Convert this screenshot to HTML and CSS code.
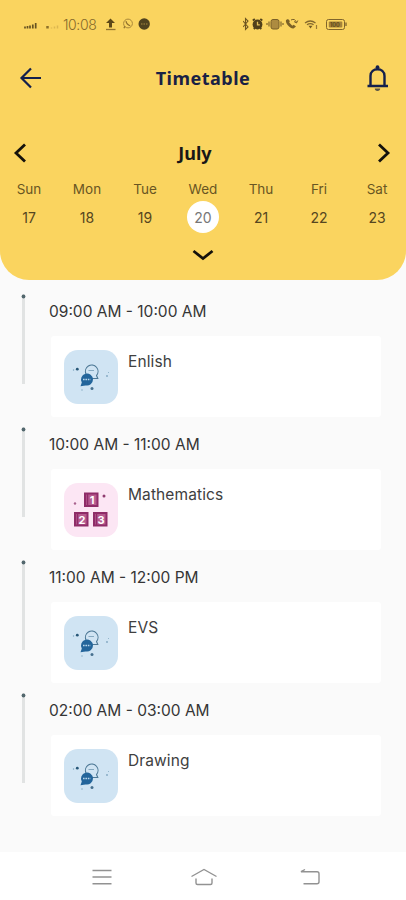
FILE: index.html
```html
<!DOCTYPE html>
<html lang="en">
<head>
    <meta charset="UTF-8">
    <meta name="viewport" content="width=device-width, initial-scale=1.0">
    <title>Timetable</title>
    <link rel="stylesheet" href="styles.css">
</head>
<body>
    <!-- Shared icons -->
    <svg class="sprite" width="0" height="0">
        <symbol id="chat" viewBox="0 0 54 54">
            <path d="M22 24a6.3 6.3 0 1 1 10.5 1.5l1.3 3h-7" fill="none" stroke="#4d7895" stroke-width="1.1"/>
            <path d="M24.5 20.5h5.5" stroke="#86a9c0" stroke-width="1"/>
            <path d="M16.500 36.200l1.300-3.600a6 6 0 1 1 3.700 2.800z" fill="#23659b"/>
            <path d="M19 29.500h7.500" stroke="#b7d6ec" stroke-width="1.500" stroke-dasharray="1.600 0.800"/>
            <circle cx="13.300" cy="19.200" r="1.400" fill="#285778"/>
            <circle cx="9.500" cy="20" r="0.700" fill="#7fa6c0"/>
            <circle cx="28" cy="38.500" r="1.500" fill="#47718f"/>
            <circle cx="18" cy="40" r="0.700" fill="#7fa6c0"/>
            <circle cx="43" cy="26" r="0.900" fill="#7fa6c0"/>
            <circle cx="44.500" cy="22.500" r="0.500" fill="#7fa6c0"/>
        </symbol>
    </svg>

    <div class="header">
        <div class="status">
            <div class="status-left">
                <svg width="41" height="16" viewBox="0 0 41 16">
                    <path d="M2 10.500v2M4.500 10v2.500M7 9.500v3M9.800 8.500v4M12.700 7v5.500" transform="translate(1 0)" stroke="#665221" stroke-width="1.700"/>
                    <path d="M25.500 10v2.500" stroke="#8d7028" stroke-width="2.500"/>
                    <path d="M29.500 11.500v1M32.500 10.500v2M35.500 9.500v3" stroke="#dcb650" stroke-width="1.500"/>
                </svg>
                <span class="clock">10:08</span>
                <svg width="50" height="16" viewBox="0 0 50 16">
                    <path d="M8 2.500l4.500 4.500h-3v4.500h-3V7h-3z" transform="translate(2.500 0)" fill="#5d4818"/>
                    <path d="M6 13.500h9.500" stroke="#927432" stroke-width="1.300"/>
                    <circle cx="28" cy="7.500" r="4.400" fill="none" stroke="#a98739" stroke-width="1"/>
                    <path d="M24 12.200l.7-2M26 5.200q.6 3.500 4.200 4.600" fill="none" stroke="#91712c" stroke-width="1.200"/>
                    <circle cx="44.200" cy="8" r="5.700" fill="#51431f"/>
                    <path d="M41 8h1.500M43.500 8H45M46 8h1.500" stroke="#aa8a40" stroke-width="1.200"/>
                </svg>
            </div>
            <svg class="status-right" width="108" height="16" viewBox="0 0 108 16">
                <path d="M0 5l5 6-2.500 2.500v-11L5 5l-5 6" fill="none" stroke="#6d5521" stroke-width="1.100"/>
                <circle cx="14.500" cy="8.500" r="4.900" fill="#51401a"/>
                <path d="M9.800 4.500l2-1.500M19.300 4.500l-2-1.500M10.800 13l1-1M18.300 13l-1-1" stroke="#51401a" stroke-width="1.800"/>
                <path d="M14.500 5.800v3h2.300" fill="none" stroke="#e6c15a" stroke-width="1.300"/>
                <rect x="28" y="3.500" width="8" height="9.500" rx="2" fill="#ad8b40" stroke="#795f28"/>
                <path d="M26 5.500v5M24 7v2M38 5.500v5M40 7v2" stroke="#80662c" stroke-width="1.200"/>
                <path d="M43 4c-1 3 4 9 7.500 8.500l2.500-2-2.300-1.700-1.400.9-3.100-3.100.7-1.600L45 3z" fill="#7b6127"/>
                <path d="M48 4q4-2 5.500 2.500M51 5.500L53.500 7l1.300-2.500" fill="none" stroke="#7b6127" stroke-width="1"/>
                <path d="M62 7q5.300-4 10.500 0M64 8.800q3.300-2.500 6.600 0" fill="none" stroke="#85692c" stroke-width="1.300"/>
                <path d="M65.500 9.800h4l-2 2.800z" fill="#715923"/>
                <path d="M73.500 9v4" stroke="#9b7a34" stroke-width="1.200"/>
                <rect x="83.500" y="3.500" width="18" height="10" rx="2" fill="none" stroke="#80652b"/>
                <rect x="85.800" y="5.500" width="13.500" height="6" rx="1" fill="#a68439"/>
                <path d="M103 6.500v3.500" stroke="#80652b" stroke-width="1.300"/>
                <text class="battery" x="87" y="10.500">100</text>
            </svg>
        </div>

        <div class="titlebar">
            <svg width="24" height="24" viewBox="0 0 24 24" fill="none" stroke="#14204c" stroke-width="2.200">
                <path d="M24 12H4.500M14 2.500L4.500 12l9.500 9.500"/>
            </svg>
            <h1>Timetable</h1>
            <svg width="24" height="28" viewBox="0 0 24 28">
                <path d="M5.500 21.500V12c0-9 14-9 14 0v9.500M2.500 22H23" fill="none" stroke="#14204c" stroke-width="2.400"/>
                <circle cx="12.500" cy="3.200" r="1.900" fill="#14204c"/>
                <path d="M9.800 24.500h5.400a2.700 2.500 0 0 1-5.400 0z" fill="#5c5646"/>
            </svg>
        </div>

        <div class="month">
            <svg width="14" height="20" viewBox="0 0 14 20"><path d="M12 1.500L3 10l9 8.500"/></svg>
            <h2>July</h2>
            <svg width="14" height="20" viewBox="0 0 14 20"><path d="M2 1.500L11 10l-9 8.500"/></svg>
        </div>

        <div class="week">
            <div class="day">Sun<span class="date">17</span></div>
            <div class="day">Mon<span class="date">18</span></div>
            <div class="day">Tue<span class="date">19</span></div>
            <div class="day">Wed<span class="date active">20</span></div>
            <div class="day">Thu<span class="date">21</span></div>
            <div class="day">Fri<span class="date">22</span></div>
            <div class="day">Sat<span class="date">23</span></div>
        </div>

        <svg class="expand" width="22" height="12" viewBox="0 0 22 12"><path d="M1.500 2L11 9.500 20.500 2"/></svg>
    </div>

    <div class="schedule">
        <div class="slot">
            <div class="line"></div>
            <div class="lesson">
                <div class="time">09:00 AM - 10:00 AM</div>
                <div class="card">
                    <svg class="thumb blue"><use href="#chat"/></svg>
                    <span class="subject">Enlish</span>
                </div>
            </div>
        </div>
        <div class="slot">
            <div class="line"></div>
            <div class="lesson">
                <div class="time">10:00 AM - 11:00 AM</div>
                <div class="card">
                    <svg class="thumb pink" viewBox="0 0 54 54">
                        <g fill="#b65b8f" stroke="#8f2c68" stroke-width="2">
                            <rect x="21" y="10.500" width="12.500" height="12.500"/>
                            <rect x="11" y="30" width="12.500" height="12.500"/>
                            <rect x="30" y="30" width="12.500" height="12.500"/>
                        </g>
                        <path d="M23.500 11v11.500M13.500 30.500V42M32.500 30.500V42" stroke="#8f2c68" stroke-width="1.500"/>
                        <text class="digit" x="28" y="21">1</text>
                        <text class="digit" x="18" y="40.500">2</text>
                        <text class="digit" x="37" y="40.500">3</text>
                        <circle cx="40" cy="13" r="1.500" fill="#8f3c70"/>
                        <circle cx="11" cy="20.500" r="1.200" fill="#a8628d"/>
                    </svg>
                    <span class="subject">Mathematics</span>
                </div>
            </div>
        </div>
        <div class="slot">
            <div class="line"></div>
            <div class="lesson">
                <div class="time">11:00 AM - 12:00 PM</div>
                <div class="card">
                    <svg class="thumb blue"><use href="#chat"/></svg>
                    <span class="subject">EVS</span>
                </div>
            </div>
        </div>
        <div class="slot">
            <div class="line"></div>
            <div class="lesson">
                <div class="time">02:00 AM - 03:00 AM</div>
                <div class="card">
                    <svg class="thumb blue"><use href="#chat"/></svg>
                    <span class="subject">Drawing</span>
                </div>
            </div>
        </div>
    </div>

    <div class="navbar">
        <svg width="20" height="18" viewBox="0 0 20 18"><path d="M.5 2.500h19M.5 9h19M.5 15.700h19"/></svg>
        <svg width="28" height="18" viewBox="0 0 28 18"><path d="M1.500 8.500L14 1.500l12.500 7M6 10.500V15q0 1.500 1.500 1.500h13q1.500 0 1.500-1.500v-4.500"/></svg>
        <svg class="back" width="20" height="18" viewBox="0 0 20 18"><path d="M5 1.500L1 3.700h16q2 0 2 2v8q0 2-2 2H3.500"/></svg>
    </div>
</body>
</html>
```
FILE: styles.css
```css
body {
    font-family: Inter, Roboto, sans-serif;
    margin: 0;
    height: 900px;
    display: flex;
    flex-direction: column;
    background-color: #fafafa;
    color: #353535;
    overflow: hidden;
}

.sprite {
    display: none;
}

/* Yellow calendar header */
.header {
    height: 280px;
    box-sizing: border-box;
    background-color: #fad45f;
    border-radius: 0 0 29px 29px;
}

.status {
    height: 32px;
    padding: 16px 55px 0 22px;
    box-sizing: border-box;
    display: flex;
    justify-content: space-between;
}

.status-left {
    display: flex;
}

.clock {
    width: 37px;
    font-size: 14px;
    line-height: 17px;
    font-weight: 300;
    letter-spacing: -0.4px;
    color: #85682a;
}

.battery {
    font-size: 5.500px;
    font-weight: 700;
    fill: #604b1c;
}

.titlebar {
    height: 92px;
    padding: 0 17px;
    display: flex;
    align-items: center;
    justify-content: space-between;
}

h1, h2 {
    margin: 0;
    font-family: "Noto Sans", "Open Sans", sans-serif;
    font-weight: 700;
    font-size: 18px;
}

h1 {
    letter-spacing: 0.5px;
    color: #192144;
}

h2 {
    margin-right: 14px;
    color: #171717;
}

.month {
    height: 58px;
    padding: 0 15px 0 13px;
    display: flex;
    align-items: center;
    justify-content: space-between;
}

.month svg, .expand {
    fill: none;
    stroke: #15120c;
    stroke-width: 2.800;
}

.week {
    display: grid;
    grid-template-columns: repeat(7, 1fr);
}

.day {
    display: flex;
    flex-direction: column;
    align-items: center;
    font-size: 13.500px;
    line-height: 14px;
    color: #695623;
}

.date {
    width: 32px;
    height: 32px;
    margin-top: 5px;
    line-height: 34px;
    font-size: 14px;
    text-align: center;
    border-radius: 50%;
    color: #554620;
}

.active {
    background-color: #fff;
    color: #777;
}

.expand {
    display: block;
    margin: 16px auto 0;
}

/* Lessons of the day */
.schedule {
    flex: 1;
    padding-top: 14px;
}

.slot {
    height: 133px;
    display: flex;
}

.line {
    width: 5px;
    height: 90px;
    margin-left: 21px;
    background:
        radial-gradient(circle, #52676d 1.600px, transparent 2.300px) top / 5px 5px no-repeat,
        linear-gradient(#e1e3e3, #e1e3e3) center / 3px 100% no-repeat;
}

.lesson {
    margin-left: 23px;
}

.time {
    height: 34px;
    line-height: 35px;
    font-size: 15.500px;
    white-space: nowrap;
}

.card {
    width: 330px;
    height: 81px;
    margin: 8px 0 0 2px;
    padding: 14px 13px;
    box-sizing: border-box;
    display: flex;
    gap: 10px;
    background-color: #fff;
    border-radius: 3px;
}

.thumb {
    width: 54px;
    height: 54px;
    border-radius: 14px;
}

.blue {
    background-color: #d0e4f3;
}

.pink {
    background-color: #fce6f4;
}

.digit {
    font-size: 11px;
    font-weight: 700;
    text-anchor: middle;
    fill: #fff;
}

.subject {
    font-size: 15.500px;
    line-height: 23px;
    letter-spacing: 0.1px;
    color: #404040;
}

/* System navigation */
.navbar {
    height: 48px;
    padding-left: 92px;
    display: flex;
    align-items: center;
    gap: 78px;
    background-color: #fff;
}

.navbar svg {
    margin-top: 2px;
    fill: none;
    stroke: #929292;
    stroke-width: 1.400;
}

.navbar .back {
    margin-left: 4px;
}
```
